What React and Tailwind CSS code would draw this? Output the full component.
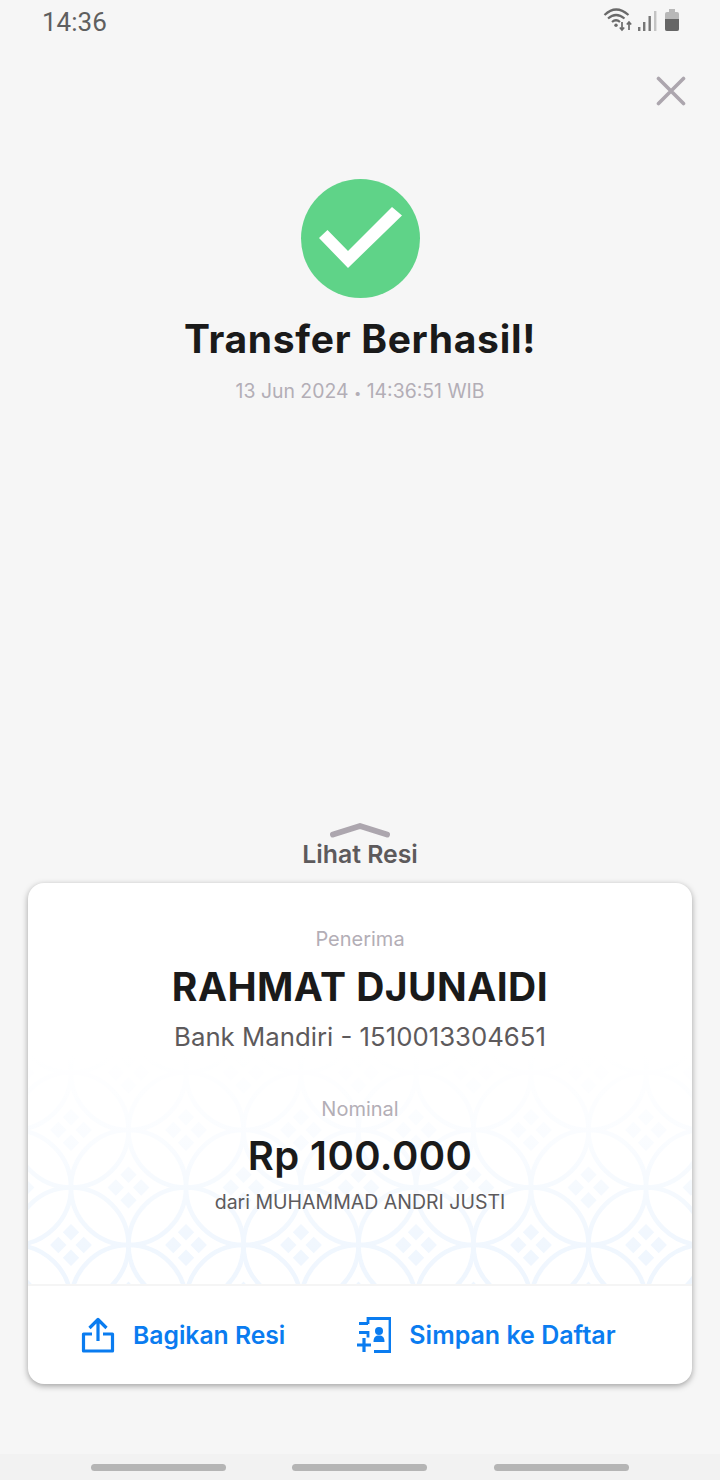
const font = { fontFamily: "Inter, 'Liberation Sans', sans-serif" };

function Kawung() {
  const cells = [];
  for (let row = -3; row < 6; row++) {
    for (let col = -1; col < 8; col++) {
      const x = 43 + col * 115 + (Math.abs(row) % 2 === 1 ? 57.5 : 0);
      const y = 74 + row * 57.5;
      cells.push(
        <g key={`${row}-${col}`} transform={`translate(${x} ${y})`}>
          <circle r="57.5" fill="none" stroke="#eff6fe" strokeWidth="4.5" />
          <rect x="-5.8" y="-18.5" width="11.6" height="11.6" transform="rotate(45 0 -12.7)" fill="#eff6fe" />
          <rect x="-5.8" y="6.9" width="11.6" height="11.6" transform="rotate(45 0 12.7)" fill="#eff6fe" />
          <rect x="-18.5" y="-5.8" width="11.6" height="11.6" transform="rotate(45 -12.7 0)" fill="#eff6fe" />
          <rect x="6.9" y="-5.8" width="11.6" height="11.6" transform="rotate(45 12.7 0)" fill="#eff6fe" />
        </g>
      );
    }
  }
  return (
    <svg className="absolute inset-0 h-full w-full" viewBox="0 0 664 228" preserveAspectRatio="none">
      <defs>
        <linearGradient id="fade" x1="0" y1="0" x2="0" y2="1">
          <stop offset="0" stopColor="#fff" stopOpacity="1" />
          <stop offset="0.35" stopColor="#fff" stopOpacity="0.7" />
          <stop offset="0.8" stopColor="#fff" stopOpacity="0.12" />
          <stop offset="1" stopColor="#fff" stopOpacity="0" />
        </linearGradient>
      </defs>
      {cells}
      <rect width="664" height="228" fill="url(#fade)" />
    </svg>
  );
}

export default function App() {
  return (
    <div className="flex h-[1480px] w-[720px] flex-col overflow-hidden bg-[#f6f6f6]" style={font}>
      <div className="flex h-[44px] items-center justify-between pl-[42px] pr-[38px]">
        <span className="text-[26px] leading-none text-[#5f5f5f]" style={{ fontFamily: "Roboto, sans-serif" }}>14:36</span>
        <svg width="80" height="44" viewBox="0 0 80 44">
          <path d="M2.5 15Q14 4 26.5 15M6 18.5Q14 11.5 22.5 18.5M10 22Q14 18.5 18 22" fill="none" stroke="#6a6a6a" strokeWidth="2.2" />
          <circle cx="14" cy="25.3" r="1.7" fill="#6a6a6a" />
          <path d="M20 22v8M17.8 27.5l2.2 2.5 2.2-2.5M27 30v-8M24.8 24.5l2.2-2.5 2.2 2.5" fill="none" stroke="#6a6a6a" strokeWidth="1.7" />
          <rect x="36" y="27" width="2.4" height="4" fill="#777" />
          <rect x="41" y="22" width="2.4" height="9" fill="#777" />
          <rect x="46.5" y="16" width="2.4" height="15" fill="#777" />
          <rect x="52" y="11" width="2.4" height="20" fill="#c4c4c4" />
          <rect x="63" y="12" width="14" height="19" rx="2" fill="#b8b8b8" />
          <rect x="67" y="9" width="6" height="3" fill="#b8b8b8" />
          <path d="M63 19h14v10a2 2 0 0 1-2 2H65a2 2 0 0 1-2-2z" fill="#666" />
        </svg>
      </div>
      <div className="flex justify-end pr-[34px] pt-[32px]">
        <svg width="30" height="30" viewBox="0 0 30 30">
          <path d="M2.5 2.5l25 25M27.5 2.5l-25 25" stroke="#aca6ae" strokeWidth="3.6" strokeLinecap="round" />
        </svg>
      </div>
      <div className="mt-[73px] flex flex-col items-center">
        <div className="flex h-[119px] w-[119px] items-center justify-center rounded-full bg-[#5fd388]">
          <svg width="119" height="119" viewBox="0 0 119 119">
            <polygon points="18,59 26.5,51 47,72 91,28 101,36.5 47,89" fill="#fff" />
          </svg>
        </div>
        <h1 className="mt-[18px] text-[39px] font-bold leading-[46px] tracking-[0.7px] text-[#1a1a1a]">Transfer Berhasil!</h1>
        <p className="mt-[15px] text-[19.4px] leading-[28px] text-[#b3aeb6]">13 Jun 2024 <span className="text-[13px]">•</span> 14:36:51 WIB</p>
      </div>
      <div className="mt-[415px] flex flex-col items-center">
        <svg width="62" height="18" viewBox="0 0 62 18">
          <path d="M4 12.5L31 4 58 12.5" fill="none" stroke="#aca6ae" strokeWidth="6" strokeLinecap="round" strokeLinejoin="round" />
        </svg>
        <span className="text-[24.8px] font-semibold leading-[28px] text-[#5d5a5c]">Lihat Resi</span>
      </div>
      <div className="mx-[28px] mt-[15px] flex h-[501px] flex-col overflow-hidden rounded-[16px] bg-white shadow-[0_2px_6px_rgba(0,0,0,0.35)]">
        <div className="relative h-[401px] shrink-0">
          <div className="absolute inset-x-0 bottom-0 h-[228px]"><Kawung /></div>
          <div className="relative flex flex-col items-center pt-[43px]">
            <span className="text-[20px] leading-[26px] text-[#b3aeb6]">Penerima</span>
            <span className="mt-[12px] text-[39px] font-bold leading-[46px] tracking-[0.45px] text-[#1a1a1a]">RAHMAT DJUNAIDI</span>
            <span className="mt-[10px] text-[25.75px] leading-[34px] text-[#5d5a5c]">Bank Mandiri - 1510013304651</span>
            <span className="mt-[42px] text-[20px] leading-[26px] text-[#b3aeb6]">Nominal</span>
            <span className="mt-[11px] text-[40px] font-semibold leading-[46px] tracking-[0.4px] text-[#1a1a1a]">Rp 100.000</span>
            <span className="mt-[10px] text-[19.5px] leading-[26px] text-[#5d5a5c]">dari MUHAMMAD ANDRI JUSTI</span>
          </div>
        </div>
        <div className="flex flex-1 items-center border-t-2 border-[#f5f5f5]">
          <div className="flex items-center pl-[53px]">
            <svg width="34" height="36" viewBox="0 0 34 36">
              <path d="M11 17H2.5v17h29V17H22M17 24V3M8.5 11L17 2.5 25.5 11" fill="none" stroke="#0a7cf0" strokeWidth="3.2" strokeLinejoin="round" />
            </svg>
            <span className="ml-[18px] text-[24.7px] font-semibold leading-none text-[#0a7cf0]">Bagikan Resi</span>
          </div>
          <div className="ml-[72px] flex items-center">
            <svg width="34" height="36" viewBox="0 0 34 36">
              <path d="M11 7V1.5H33v33H17M2 6.5h9M2 15.5h9v5" fill="none" stroke="#0a7cf0" strokeWidth="2.8" />
              <path d="M7 21v14M0 28h14" fill="none" stroke="#0a7cf0" strokeWidth="3.2" />
              <circle cx="22" cy="14" r="4" fill="#0a7cf0" />
              <path d="M16.5 25c0-5 2-6.5 5.5-6.5s5.5 1.5 5.5 6.5z" fill="#0a7cf0" />
            </svg>
            <span className="ml-[18px] text-[25px] font-semibold leading-none text-[#0a7cf0]">Simpan ke Daftar</span>
          </div>
        </div>
      </div>
      <div className="mt-auto flex h-[26px] items-center bg-[#f2f2f2] pl-[91px]">
        <div className="h-[7px] w-[135px] rounded-full bg-[#b5b5b5]" />
        <div className="ml-[66px] h-[7px] w-[135px] rounded-full bg-[#b5b5b5]" />
        <div className="ml-[67px] h-[7px] w-[135px] rounded-full bg-[#b5b5b5]" />
      </div>
    </div>
  );
}
